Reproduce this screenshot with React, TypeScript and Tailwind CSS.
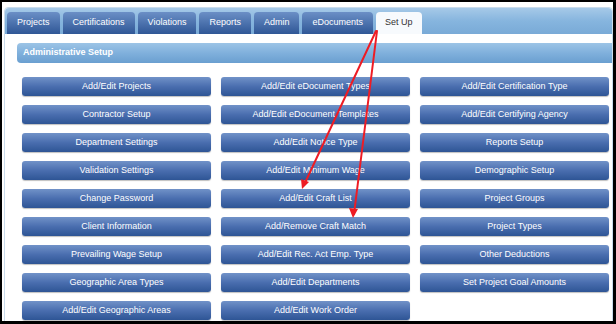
import React from "react";

const tabs = ["Projects", "Certifications", "Violations", "Reports", "Admin", "eDocuments"];

// button labels, row by row (3 columns)
const buttons: string[] = [
  "Add/Edit Projects",
  "Add/Edit eDocument Types",
  "Add/Edit Certification Type",
  "Contractor Setup",
  "Add/Edit eDocument Templates",
  "Add/Edit Certifying Agency",
  "Department Settings",
  "Add/Edit Notice Type",
  "Reports Setup",
  "Validation Settings",
  "Add/Edit Minimum Wage",
  "Demographic Setup",
  "Change Password",
  "Add/Edit Craft List",
  "Project Groups",
  "Client Information",
  "Add/Remove Craft Match",
  "Project Types",
  "Prevailing Wage Setup",
  "Add/Edit Rec. Act Emp. Type",
  "Other Deductions",
  "Geographic Area Types",
  "Add/Edit Departments",
  "Set Project Goal Amounts",
  "Add/Edit Geographic Areas",
  "Add/Edit Work Order",
];

export default function App() {
  return (
    <div
      className="relative w-[616px] h-[324px] overflow-hidden border-t-2 border-l-2 border-r-[3px] border-b-[3px] border-black bg-white"
      style={{ fontFamily: '"Liberation Sans", Arial, sans-serif' }}
    >
      <div className="ml-[2px] mt-[5px] h-[330px] rounded-t-[4px] border border-[#c9dbeb]">
        {/* Tab strip */}
        <div className="flex h-[26px] items-end gap-[3px] rounded-t-[4px] bg-gradient-to-b from-[#a6c9e8] via-[#86b5de] to-[#79aad7] pl-[2px]">
          {tabs.map((t) => (
            <div
              key={t}
              className="flex h-[22px] items-center rounded-t-[4px] bg-gradient-to-b from-[#6b8fc6] to-[#2f5796] px-[10px] text-[9px] text-white"
            >
              {t}
            </div>
          ))}
          <div className="flex h-[22px] items-center rounded-t-[4px] bg-[#f7fafd] px-[9px] text-[9px] text-[#333]">
            Set Up
          </div>
        </div>

        {/* Panel */}
        <div className="border-t-2 border-white bg-white pl-[12px] pt-[7px]">
          <div className="flex h-[20px] items-center rounded-l-[4px] bg-gradient-to-b from-[#9cc4e6] via-[#80b0dc] to-[#6a9fd0] pl-[6px] text-[9px] font-bold text-white">
            Administrative Setup
          </div>
          <div className="mt-[14px] ml-[5px] grid grid-cols-[189px_189px_189px] gap-x-[10px] gap-y-[9px]">
            {buttons.map((b) => (
              <div
                key={b}
                className="flex h-[19px] items-center justify-center rounded-[3px] bg-gradient-to-b from-[#7192c8] via-[#4a6eaf] to-[#2e5595] text-[9px] text-white shadow-[0_1px_1px_rgba(0,0,0,0.25)]"
              >
                {b}
              </div>
            ))}
          </div>
        </div>
      </div>

      {/* Red annotation arrows */}
      <svg className="pointer-events-none absolute left-[-2px] top-[-2px]" width="616" height="324">
        <g stroke="#ee1c24" strokeWidth="2" fill="none" strokeLinecap="round">
          <line x1="376" y1="31" x2="304" y2="185" />
          <line x1="377" y1="31" x2="354" y2="214" />
        </g>
        <g fill="#ee1c24">
          <polygon points="302,189 301,179 309,182" />
          <polygon points="353,218 349,208 358,209" />
        </g>
      </svg>
    </div>
  );
}
